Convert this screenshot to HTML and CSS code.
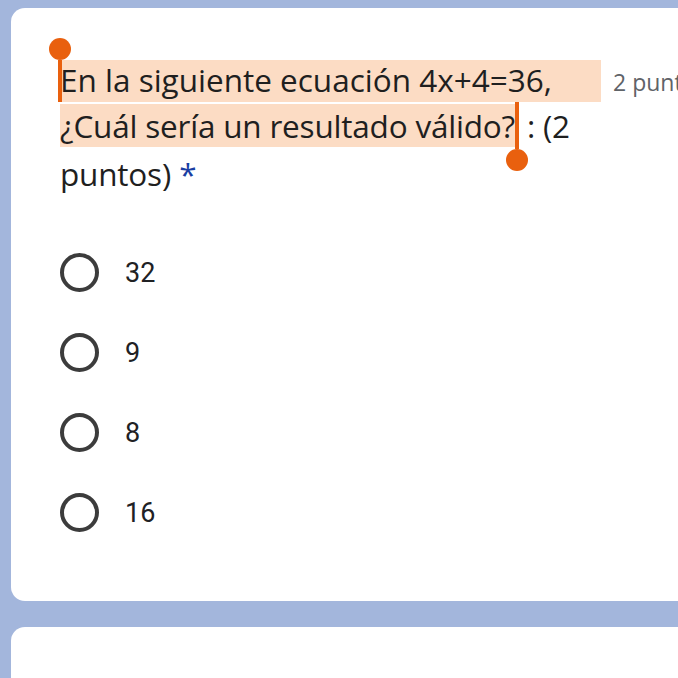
FILE: index.html
```html
<!DOCTYPE html>
<html lang="es">
<head>
<meta charset="utf-8">
<link rel="stylesheet" href="styles.css">
</head>
<body>
<div class="page">
  <section class="card">
    <div class="q-head">
      <div class="q-title">
        <span class="line1">En la siguiente ecuación 4x+4=36,</span><span class="sel">¿Cuál sería un resultado válido?<span class="anchor"><span class="handle handle-end"><span class="bar"></span><span class="knob"></span></span></span></span><span class="rest"> : (2 puntos)</span> <span class="req">*</span>
        <span class="handle handle-start"><span class="bar"></span><span class="knob"></span></span>
      </div>
      <div class="points">2 puntos</div>
    </div>
    <div class="options">
      <label class="opt"><span class="radio"></span><span class="opt-label">32</span></label>
      <label class="opt"><span class="radio"></span><span class="opt-label">9</span></label>
      <label class="opt"><span class="radio"></span><span class="opt-label">8</span></label>
      <label class="opt"><span class="radio"></span><span class="opt-label">16</span></label>
    </div>
  </section>
  <section class="card card-next"></section>
</div>
</body>
</html>
```
FILE: styles.css
```css
html, body {
  margin: 0;
  padding: 0;
}
body {
  background: #a3b6dc;
  font-family: "Open Sans", Roboto, sans-serif;
  color: #202124;
  overflow: hidden;
  width: 678px;
  height: 678px;
}
.page {
  padding: 8px 0 0 11px;
  display: flex;
  flex-direction: column;
  gap: 26px;
}
.card {
  background: #fff;
  border-radius: 14px 0 0 14px;
  width: 667px;
  height: 593px;
  box-sizing: border-box;
  padding: 46px 0 0 49px;
  overflow: hidden;
}
.card-next {
  height: 60px;
  border-radius: 14px 0 0 0;
}
.q-head {
  display: flex;
  align-items: flex-start;
}
.q-title {
  position: relative;
  flex: 0 0 541px;
  font-size: 31.5px;
  line-height: 48px;
  color: #1f1f1f;
}
.line1 {
  display: block;
  background: #fcdcc4;
  line-height: 39px;
  padding-bottom: 3px;
  margin-top: 6px;
}
.sel {
  background: #fcdcc4;
  line-height: 48px;
  letter-spacing: -0.2px;
}
.rest {
  letter-spacing: -0.2px;
}
.anchor {
  position: relative;
  display: inline-block;
  vertical-align: top;
  width: 4px;
  height: 1px;
}
.req {
  color: #1a3ea3;
}
.points {
  margin-left: 12px;
  margin-top: 12px;
  font-size: 23px;
  color: #5f6368;
  white-space: nowrap;
}
.handle {
  position: absolute;
  width: 22px;
  display: flex;
  flex-direction: column;
  align-items: center;
}
.handle .bar {
  width: 4px;
  background: #e9600e;
}
.handle .knob {
  width: 22px;
  height: 22px;
  border-radius: 50%;
  background: #e9600e;
}
.handle-start {
  left: -11px;
  top: -16px;
  flex-direction: column-reverse;
}
.handle-start .bar {
  height: 42px;
}
.handle-end {
  left: -9px;
  top: 0;
}
.handle-end .bar {
  height: 47px;
}
.options {
  margin-top: 55px;
  display: flex;
  flex-direction: column;
  gap: 41px;
}
.opt {
  display: flex;
  align-items: center;
  gap: 26px;
  height: 39px;
}
.radio {
  width: 39px;
  height: 39px;
  box-sizing: border-box;
  border: 4px solid #3c3c3c;
  border-radius: 50%;
}
.opt-label {
  font-family: Roboto, sans-serif;
  font-size: 27px;
  color: #202124;
}
```
